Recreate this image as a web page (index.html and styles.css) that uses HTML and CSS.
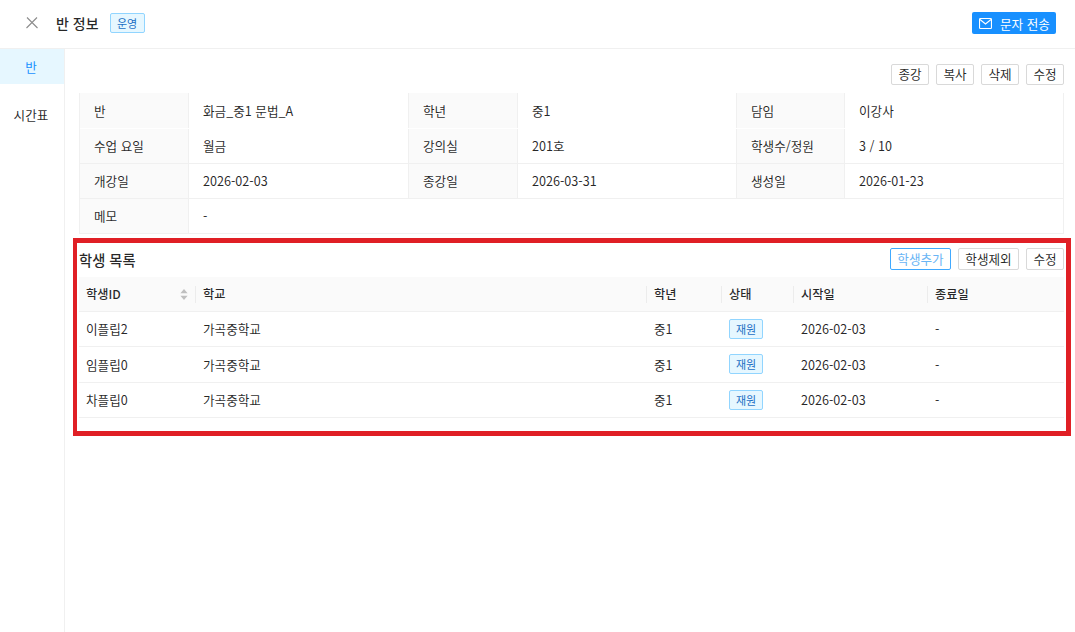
FILE: index.html
```html
<!DOCTYPE html>
<html lang="ko">
<head>
<meta charset="utf-8">
<title>반 정보</title>
<link rel="stylesheet" href="styles.css">
</head>
<body>
<div class="page">
  <header class="topbar">
    <div class="topbar-left">
      <svg class="close-icon" width="12" height="12" viewBox="0 0 12 12"><path d="M1 .5l10.500 10.500M11 .5L.5 11" stroke="#8c8c8c" stroke-width="1.100" fill="none"/></svg>
      <span class="page-title">반 정보</span>
      <span class="tag tag-head">운영</span>
    </div>
    <button class="send-btn">
      <svg width="13" height="11" viewBox="0 0 13 11"><rect x=".55" y=".55" width="11.900" height="9.900" rx=".8" fill="none" stroke="#fff" stroke-width="1.100"/><path d="M1 1.500l5.500 4.500 5.500-4.500" fill="none" stroke="#fff" stroke-width="1.100"/></svg>
      <span>문자 전송</span>
    </button>
  </header>
  <div class="body">
    <nav class="side">
      <div class="side-item active">반</div>
      <div class="side-item">시간표</div>
    </nav>
    <main class="content">
      <div class="actions top-actions">
        <button class="btn">종강</button>
        <button class="btn">복사</button>
        <button class="btn">삭제</button>
        <button class="btn">수정</button>
      </div>
      <div class="desc">
        <div class="d-row">
          <div class="d-label">반</div><div class="d-value">화금_중1 문법_A</div>
          <div class="d-label">학년</div><div class="d-value">중1</div>
          <div class="d-label">담임</div><div class="d-value">이강사</div>
        </div>
        <div class="d-row">
          <div class="d-label">수업 요일</div><div class="d-value">월금</div>
          <div class="d-label">강의실</div><div class="d-value">201호</div>
          <div class="d-label">학생수/정원</div><div class="d-value">3 / 10</div>
        </div>
        <div class="d-row">
          <div class="d-label">개강일</div><div class="d-value">2026-02-03</div>
          <div class="d-label">종강일</div><div class="d-value">2026-03-31</div>
          <div class="d-label">생성일</div><div class="d-value">2026-01-23</div>
        </div>
        <div class="d-row">
          <div class="d-label">메모</div><div class="d-value d-wide">-</div>
        </div>
      </div>
      <section class="students">
        <div class="section-head">
          <h2 class="section-title">학생 목록</h2>
          <div class="actions">
            <button class="btn btn-wide btn-primary">학생추가</button>
            <button class="btn btn-wide">학생제외</button>
            <button class="btn">수정</button>
          </div>
        </div>
        <div class="t-row t-head">
          <div class="cell sort-cell">학생ID
            <svg class="sorter" width="8" height="11" viewBox="0 0 8 11"><path d="M4 0l3.600 4.300H.4zM4 11L.4 6.700h7.200z" fill="#bfbfbf"/></svg>
          </div>
          <div class="cell">학교</div>
          <div class="cell">학년</div>
          <div class="cell">상태</div>
          <div class="cell">시작일</div>
          <div class="cell">종료일</div>
        </div>
        <div class="t-row t-first">
          <div class="cell">이플립2</div><div class="cell">가곡중학교</div><div class="cell">중1</div>
          <div class="cell"><span class="tag">재원</span></div><div class="cell">2026-02-03</div><div class="cell">-</div>
        </div>
        <div class="t-row">
          <div class="cell">임플립0</div><div class="cell">가곡중학교</div><div class="cell">중1</div>
          <div class="cell"><span class="tag">재원</span></div><div class="cell">2026-02-03</div><div class="cell">-</div>
        </div>
        <div class="t-row">
          <div class="cell">차플립0</div><div class="cell">가곡중학교</div><div class="cell">중1</div>
          <div class="cell"><span class="tag">재원</span></div><div class="cell">2026-02-03</div><div class="cell">-</div>
        </div>
      </section>
    </main>
  </div>
  <div class="highlight"></div>
</div>
</body>
</html>
```

FILE: styles.css
```css
* { box-sizing: border-box; }
html, body { margin: 0; padding: 0; background: #fff; }
body {
  font-family: "Noto Sans CJK KR", "Noto Sans", sans-serif;
  font-size: 12.6px;
  color: rgba(0, 0, 0, .85);
}
.page { position: relative; width: 1075px; height: 632px; overflow: hidden; }
.topbar {
  height: 49px;
  display: flex;
  align-items: center;
  justify-content: space-between;
  padding: 0 19px 2px 26px;
  border-bottom: 1px solid #f0f0f0;
}
.topbar-left { display: flex; align-items: center; }
.close-icon { margin-right: 18px; }
.page-title { font-size: 14px; font-weight: 500; margin-right: 11px; }
.tag {
  display: inline-flex;
  align-items: center;
  justify-content: center;
  width: 34px;
  height: 20px;
  font-size: 11px;
  color: #1c6fc4;
  background: #e6f7ff;
  border: 1px solid #91d5ff;
  border-radius: 2px;
}
.tag-head { width: 35px; }
.send-btn {
  display: flex;
  align-items: center;
  gap: 8px;
  width: 84px;
  height: 22px;
  padding: 0 0 0 7px;
  font: inherit;
  color: #fff;
  background: #1890ff;
  border: 0;
  border-radius: 2px;
}
.body { display: flex; height: 583px; }
.side { width: 65px; border-right: 1px solid #f0f0f0; flex: none; }
.side-item { height: 35px; padding-right: 2px; line-height: 35px; text-align: center; }
.side-item.active { color: #1890ff; background: #e6f7ff; margin-bottom: 13px; }
.content { flex: 1; padding: 15px 11px 0 14px; }
.actions { display: flex; justify-content: flex-end; gap: 7px; }
.top-actions { height: 29px; }
.btn {
  width: 38px;
  height: 21px;
  padding: 0;
  font: inherit;
  line-height: 1;
  color: rgba(0, 0, 0, .85);
  background: #fff;
  border: 1px solid #d9d9d9;
  border-radius: 2px;
}
.btn-wide { width: 61px; }
.section-head .btn { height: 22px; }
.btn-primary { color: #69b5f5; border-color: #40a9ff; }
.desc { border: 1px solid #f0f0f0; border-top: 0; }
.d-row { display: grid; grid-template-columns: 109px 220px 109px 219px 108px 1fr; height: 35px; border-bottom: 1px solid #f0f0f0; }
.d-row:first-child { height: 36px; border-bottom-color: transparent; }
.d-row:last-child { height: 34px; border-bottom: 0; }
.d-label, .d-value { display: flex; align-items: center; padding-left: 14px; }
.d-row + .d-row > * { padding-bottom: 2px; }
.d-label { background: #fafafa; border-right: 1px solid #f0f0f0; }
.d-value { border-right: 1px solid #f0f0f0; }
.d-row > :last-child { border-right: 0; }
.d-wide { grid-column: 2 / -1; }
.students { margin-top: 14px; }
.section-head { display: flex; align-items: center; justify-content: space-between; height: 22px; margin-bottom: 7px; }
.section-title { margin: 0; font-size: 14.300px; font-weight: 500; }
.t-row { display: grid; grid-template-columns: 117px 451px 75px 72px 134px 1fr; height: 35.2px; border-bottom: 1px solid #f0f0f0; }
.t-head { background: #fafafa; font-weight: 500; font-size: 12.2px; }
.cell { position: relative; display: flex; align-items: center; padding-left: 7px; }
.t-first .cell { padding-bottom: 1px; }
.t-head .cell + .cell::before {
  content: "";
  position: absolute;
  left: -1px;
  top: 9px;
  height: 17px;
  width: 1px;
  background: #ececec;
}
.sort-cell { justify-content: space-between; padding-right: 8px; }
.highlight {
  position: absolute;
  left: 73px;
  top: 238px;
  width: 998px;
  height: 198px;
  border: 5px solid #e01f25;
  border-left-width: 4px;
  pointer-events: none;
}
```
